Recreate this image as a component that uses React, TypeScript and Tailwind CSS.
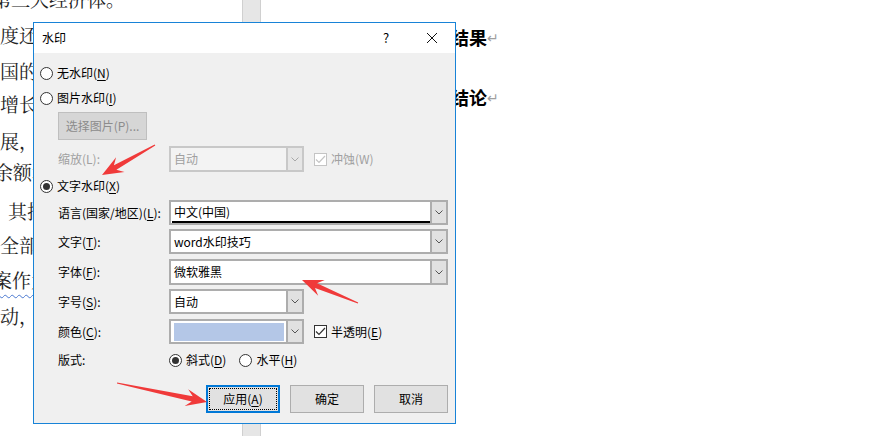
import React from 'react';
import clsx from 'clsx';

const docLines = [
  { text: '第三大经济体。', cls: '-mt-[11px] -ml-[8px]' },
  { text: '度还是从', cls: 'mt-[16px]' },
  { text: '国的一些', cls: 'mt-[16px]' },
  { text: '增长。', cls: 'mt-[13px]' },
  { text: '展，其他', cls: 'mt-[17px]' },
  { text: '余额增加', cls: 'mt-[11px] -ml-[6px]' },
  { text: '其推动', cls: 'mt-[19px] ml-[8px]' },
  { text: '全部的', cls: 'mt-[14px]' },
  { text: '案作为', cls: 'mt-[15px] -ml-[7px] underline decoration-wavy decoration-[#4a78d0] decoration-1 underline-offset-[6px]' },
  { text: '动，其中', cls: 'mt-[16px]' },
];

const arrows = [
  { from: [155, 145], to: [102, 175] },
  { from: [358, 303], to: [302, 280] },
  { from: [117, 383], to: [207, 402] },
];

function arrowPoints(from: number[], to: number[]) {
  const dx = to[0] - from[0];
  const dy = to[1] - from[1];
  const len = Math.hypot(dx, dy);
  const ux = dx / len;
  const uy = dy / len;
  const nx = -uy;
  const ny = ux;
  const head = 21;
  const at = (d: number, w: number) => [to[0] - ux * d + nx * w, to[1] - uy * d + ny * w];
  const pts = [
    [from[0] + nx * 0.6, from[1] + ny * 0.6],
    at(head * 0.72, 2.6),
    at(head, 8.5),
    to,
    at(head, -8.5),
    at(head * 0.72, -2.6),
    [from[0] - nx * 0.6, from[1] - ny * 0.6],
  ];
  return pts.map((p) => p.map((v) => v.toFixed(1)).join(',')).join(' ');
}

const K = ({ c }: { c: string }) => <span className="underline underline-offset-[2px]">{c}</span>;

const Chevron = ({ muted }: { muted?: boolean }) => (
  <svg width="8" height="5" viewBox="0 0 8 5">
    <polyline points="0.5,0.5 4,4 7.5,0.5" fill="none" stroke={muted ? '#a8a8a8' : '#555'} strokeWidth="1" />
  </svg>
);

const Radio = ({ checked }: { checked?: boolean }) => (
  <span className="flex h-[13px] w-[13px] shrink-0 items-center justify-center rounded-full border border-[#333] bg-white">
    {checked && <span className="h-[7px] w-[7px] rounded-full bg-[#333]" />}
  </span>
);

const Check = ({ disabled }: { disabled?: boolean }) => (
  <span
    className={clsx(
      'flex h-[13px] w-[13px] shrink-0 items-center justify-center border bg-white',
      disabled ? 'border-[#c4c4c4]' : 'border-[#333]'
    )}
  >
    <svg width="11" height="9" viewBox="0 0 11 9">
      <polyline points="1,4.5 4,7.5 10,1" fill="none" stroke={disabled ? '#c4c4c4' : '#333'} strokeWidth="1.2" />
    </svg>
  </span>
);

function Combo({
  width,
  height,
  disabled,
  children,
}: {
  width: string;
  height: string;
  disabled?: boolean;
  children?: React.ReactNode;
}) {
  return (
    <div
      className={clsx(
        'flex border-2',
        width,
        height,
        disabled ? 'border-[#c8c8c8] bg-[#f3f3f3] text-[#a0a0a0]' : 'border-[#adadad] bg-white text-black'
      )}
    >
      <div className="flex min-w-0 flex-1 flex-col justify-center pl-[1px]">{children}</div>
      <div
        className={clsx(
          'flex w-[16px] items-center justify-center border-l-2',
          disabled ? 'border-[#c8c8c8] bg-[#e6e6e6]' : 'border-[#adadad] bg-[#e1e1e1]'
        )}
      >
        <Chevron muted={disabled} />
      </div>
    </div>
  );
}

const Label = ({ children, muted }: { children: React.ReactNode; muted?: boolean }) => (
  <div className={clsx('w-[111px] shrink-0', muted ? 'text-[#a0a0a0]' : 'text-black')}>{children}</div>
);

function Dialog() {
  return (
    <div className="absolute left-[33px] top-[22px] flex h-[402px] w-[423px] flex-col border border-[#1883d7] bg-[#f0f0f0] text-[12px] leading-[16px] text-black">
      {/* title bar */}
      <div className="flex h-[30px] items-center bg-white">
        <span className="pl-[8px]">水印</span>
        <div className="ml-auto flex h-full">
          <div className="flex w-[46px] items-center justify-center text-[13px]">?</div>
          <div className="flex w-[46px] items-center justify-center">
            <svg width="12" height="12" viewBox="0 0 12 12">
              <path d="M1 1 L11 11 M11 1 L1 11" stroke="#111" strokeWidth="1" />
            </svg>
          </div>
        </div>
      </div>

      <div className="flex flex-1 flex-col pl-[6px] pr-[7px]">
        <div className="mt-[10px] flex h-[20px] items-center gap-[4px]">
          <Radio />
          <span>
            无水印(<K c="N" />)
          </span>
        </div>
        <div className="mt-[5px] flex h-[20px] items-center gap-[4px]">
          <Radio />
          <span>
            图片水印(<K c="I" />)
          </span>
        </div>
        <div className="mt-[4px] pl-[18px]">
          <div className="flex h-[28px] w-[89px] items-center justify-center border border-[#bfbfbf] bg-[#d6d6d6] text-[#8c8c8c]">
            选择图片(P)...
          </div>
        </div>
        <div className="mt-[6px] flex items-center pl-[18px]">
          <Label muted>缩放(L):</Label>
          <Combo width="w-[135px]" height="h-[26px]" disabled>
            <span className="pl-[2px]">自动</span>
          </Combo>
          <div className="ml-[10px] flex items-center gap-[4px] text-[#a0a0a0]">
            <Check disabled />
            <span>冲蚀(W)</span>
          </div>
        </div>
        <div className="mt-[4px] flex h-[20px] items-center gap-[4px]">
          <Radio checked />
          <span>
            文字水印(<K c="X" />)
          </span>
        </div>
        <div className="mt-[4px] flex items-center pl-[18px]">
          <Label>
            语言(国家/地区)(<K c="L" />):
          </Label>
          <Combo width="w-[279px]" height="h-[25px]">
            <span className="pl-[2px] pt-[2px]">中文(中国)</span>
            <div className="mt-[1px] h-[3px] border-y border-black" />
          </Combo>
        </div>
        <div className="mt-[4px] flex items-center pl-[18px]">
          <Label>
            文字(<K c="T" />):
          </Label>
          <Combo width="w-[279px]" height="h-[25px]">
            <span className="pl-[2px]">word水印技巧</span>
          </Combo>
        </div>
        <div className="mt-[5px] flex items-center pl-[18px]">
          <Label>
            字体(<K c="F" />):
          </Label>
          <Combo width="w-[279px]" height="h-[26px]">
            <span className="pl-[2px]">微软雅黑</span>
          </Combo>
        </div>
        <div className="mt-[4px] flex items-center pl-[18px]">
          <Label>
            字号(<K c="S" />):
          </Label>
          <Combo width="w-[135px]" height="h-[25px]">
            <span className="pl-[2px]">自动</span>
          </Combo>
        </div>
        <div className="mt-[5px] flex items-center pl-[18px]">
          <Label>
            颜色(<K c="C" />):
          </Label>
          <Combo width="w-[135px]" height="h-[25px]">
            <div className="ml-[2px] mr-[2px] h-[18px] bg-[#b4c7e7]" />
          </Combo>
          <div className="ml-[10px] flex items-center gap-[4px]">
            <Check />
            <span>
              半透明(<K c="E" />)
            </span>
          </div>
        </div>
        <div className="mt-[6px] flex h-[20px] items-center pl-[18px]">
          <Label>版式:</Label>
          <div className="flex items-center gap-[4px]">
            <Radio checked />
            <span>
              斜式(<K c="D" />)
            </span>
          </div>
          <div className="ml-[13px] flex items-center gap-[4px]">
            <Radio />
            <span>
              水平(<K c="H" />)
            </span>
          </div>
        </div>
        <div className="mt-[15px] flex justify-end gap-[10px]">
          <div className="flex h-[28px] w-[74px] items-center justify-center border-2 border-[#0078d7] bg-[#e1e1e1] p-[1px]">
            <div className="flex h-full w-full items-center justify-center border border-dotted border-black">
              应用(<K c="A" />)
            </div>
          </div>
          <div className="flex h-[28px] w-[74px] items-center justify-center border border-[#adadad] bg-[#e1e1e1]">
            确定
          </div>
          <div className="flex h-[28px] w-[74px] items-center justify-center border border-[#adadad] bg-[#e1e1e1]">
            取消
          </div>
        </div>
      </div>
    </div>
  );
}

export default function App() {
  return (
    <div
      className="relative h-[436px] w-[887px] overflow-hidden bg-white"
      style={{ fontFamily: '"Noto Sans CJK SC", "Noto Sans", sans-serif' }}
    >
      {/* document behind */}
      <div className="flex h-full">
        <div
          className="w-[242px] shrink-0 overflow-hidden text-[19px] leading-[20px] text-[#222]"
          style={{ fontFamily: '"Noto Serif CJK SC", "Noto Sans CJK SC", serif' }}
        >
          {docLines.map((l, i) => (
            <div key={i} className={clsx('h-[20px] whitespace-nowrap', l.cls)}>
              {l.text}
            </div>
          ))}
        </div>
        <div className="w-[19px] shrink-0 border-x border-[#d0d0d0] bg-[#e6e6e6]" />
        <div className="flex-1 pl-[190px] text-[18px] font-bold leading-[20px] text-black">
          <div className="mt-[27px] flex items-end">
            结果<span className="text-[14px] font-normal text-[#a0a0a0]">↵</span>
          </div>
          <div className="mt-[40px] flex items-end">
            结论<span className="text-[14px] font-normal text-[#a0a0a0]">↵</span>
          </div>
        </div>
      </div>

      <Dialog />

      <svg className="pointer-events-none absolute inset-0" width="887" height="436">
        {arrows.map((a, i) => (
          <polygon key={i} points={arrowPoints(a.from, a.to)} fill="#f03a3a" />
        ))}
      </svg>
    </div>
  );
}
